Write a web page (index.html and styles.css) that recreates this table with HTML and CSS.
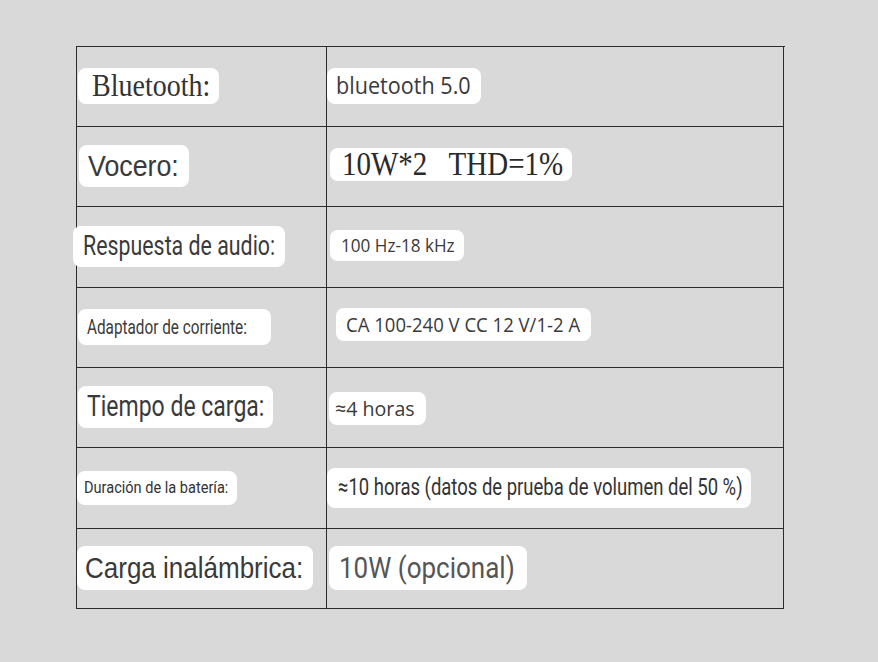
FILE: index.html
```html
<!DOCTYPE html>
<html lang="es">
<head>
<meta charset="utf-8">
<title>Especificaciones</title>
<link rel="stylesheet" href="styles.css">
</head>
<body>
<div class="specs">
  <div class="cell"><span class="pill p1l"><span class="t">Bluetooth:</span></span></div>
  <div class="cell"><span class="pill p1r"><span class="t">bluetooth 5.0</span></span></div>

  <div class="cell"><span class="pill p2l"><span class="t">Vocero:</span></span></div>
  <div class="cell"><span class="pill p2r"><span class="t">10W*2&nbsp;&nbsp; THD=1%</span></span></div>

  <div class="cell"><span class="pill p3l"><span class="t">Respuesta de audio:</span></span></div>
  <div class="cell"><span class="pill p3r"><span class="t">100 Hz-18 kHz</span></span></div>

  <div class="cell"><span class="pill p4l"><span class="t">Adaptador de corriente:</span></span></div>
  <div class="cell"><span class="pill p4r"><span class="t">CA 100-240 V CC 12 V/1-2 A</span></span></div>

  <div class="cell"><span class="pill p5l"><span class="t">Tiempo de carga:</span></span></div>
  <div class="cell"><span class="pill p5r"><span class="t">≈4 horas</span></span></div>

  <div class="cell"><span class="pill p6l"><span class="t">Duración de la batería:</span></span></div>
  <div class="cell"><span class="pill p6r"><span class="t">≈10 horas (datos de prueba de volumen del 50 %)</span></span></div>

  <div class="cell"><span class="pill p7l"><span class="t">Carga inalámbrica:</span></span></div>
  <div class="cell"><span class="pill p7r"><span class="t">10W (opcional)</span></span></div>
</div>
</body>
</html>
```

FILE: styles.css
```css
html, body {
  margin: 0;
  padding: 0;
  background: #d9d9d9;
}

body {
  padding: 46px 0 0 76px;
  font-family: "Roboto", "Liberation Sans", sans-serif;
  color: #3a3a3a;
}

.specs {
  display: grid;
  grid-template-columns: 250px 457px;
  grid-template-rows: 80px 80px 81px 80px 80px 81px 80px;
  width: 708px;
  border-top: 1px solid #2b2b2b;
  border-left: 1px solid #2b2b2b;
}

.cell {
  box-sizing: border-box;
  border-right: 1px solid #2b2b2b;
  border-bottom: 1px solid #2b2b2b;
  display: flex;
  align-items: center;
}

.pill {
  box-sizing: border-box;
  display: flex;
  align-items: center;
  background: #ffffff;
  border-radius: 8px;
  white-space: nowrap;
  overflow: visible;
}

.t {
  display: inline-block;
  transform-origin: left center;
  transform: scale(var(--sx, 1), var(--sy, 1.15));
  line-height: 1;
}

/* row 1 */
.p1l { margin: -2px 0 0 1px; width: 141px; height: 36px; padding-left: 14px;
  font-family: "Liberation Serif", serif; font-size: 28px; color: #333; }
.p1r { margin: -2px 0 0 0; width: 154px; height: 36px; padding-left: 9px;
  font-family: "Open Sans", sans-serif; font-size: 20px; --sx: 1.08; color: #3a3a3a; }

/* row 2 */
.p2l { margin: -1px 0 0 2px; width: 110px; height: 42px; padding-left: 9px;
  font-family: "Liberation Sans", sans-serif; font-size: 26px; --sx: 1.03; color: #3a3a3a; }
.p2r { margin: -5px 0 0 3px; width: 242px; height: 33px; padding-left: 12px;
  font-family: "Liberation Serif", serif; font-size: 29px; color: #2a2a2a; }

/* row 3 */
.p3l { margin: -2px 0 0 -4px; width: 212px; height: 41px; padding-left: 10px;
  font-size: 24px; --sx: 0.89; color: #3a3a3a; }
.p3r { margin: -4px 0 0 3px; width: 134px; height: 31px; padding-left: 11px;
  font-family: "Open Sans", sans-serif; font-size: 16px; --sx: 1.07; color: #3a3a3a; }

/* row 4 */
.p4l { margin: -1px 0 0 1px; width: 193px; height: 36px; padding-left: 9px;
  font-size: 18px; --sx: 0.85; color: #3a3a3a; }
.p4r { margin: -6px 0 0 9px; width: 255px; height: 33px; padding-left: 10px;
  font-family: "Open Sans", sans-serif; font-size: 17px; --sx: 1.09; color: #3a3a3a; }

/* row 5 */
.p5l { margin: -2px 0 0 1px; width: 195px; height: 42px; padding-left: 9px;
  font-size: 25px; --sx: 0.92; color: #3a3a3a; }
.p5r { margin: 1px 0 0 2px; width: 97px; height: 33px; padding-left: 6px;
  font-family: "Open Sans", sans-serif; font-size: 18px; --sx: 1.09; color: #3a3a3a; }

/* row 6 */
.p6l { margin: -1px 0 0 0; width: 160px; height: 34px; padding-left: 7px;
  font-size: 15px; --sx: 0.97; color: #333; }
.p6r { margin: -1px 0 0 0; width: 424px; height: 40px; padding-left: 11px;
  font-size: 21px; --sx: 0.88; color: #333; }

/* row 7 */
.p7l { margin: -2px 0 0 0; width: 236px; height: 44px; padding-left: 8px;
  font-family: "Liberation Sans", sans-serif; font-size: 26px; color: #3a3a3a; }
.p7r { margin: -2px 0 0 2px; width: 198px; height: 44px; padding-left: 10px;
  font-family: "Roboto", sans-serif; font-size: 26px; color: #555; }
```
